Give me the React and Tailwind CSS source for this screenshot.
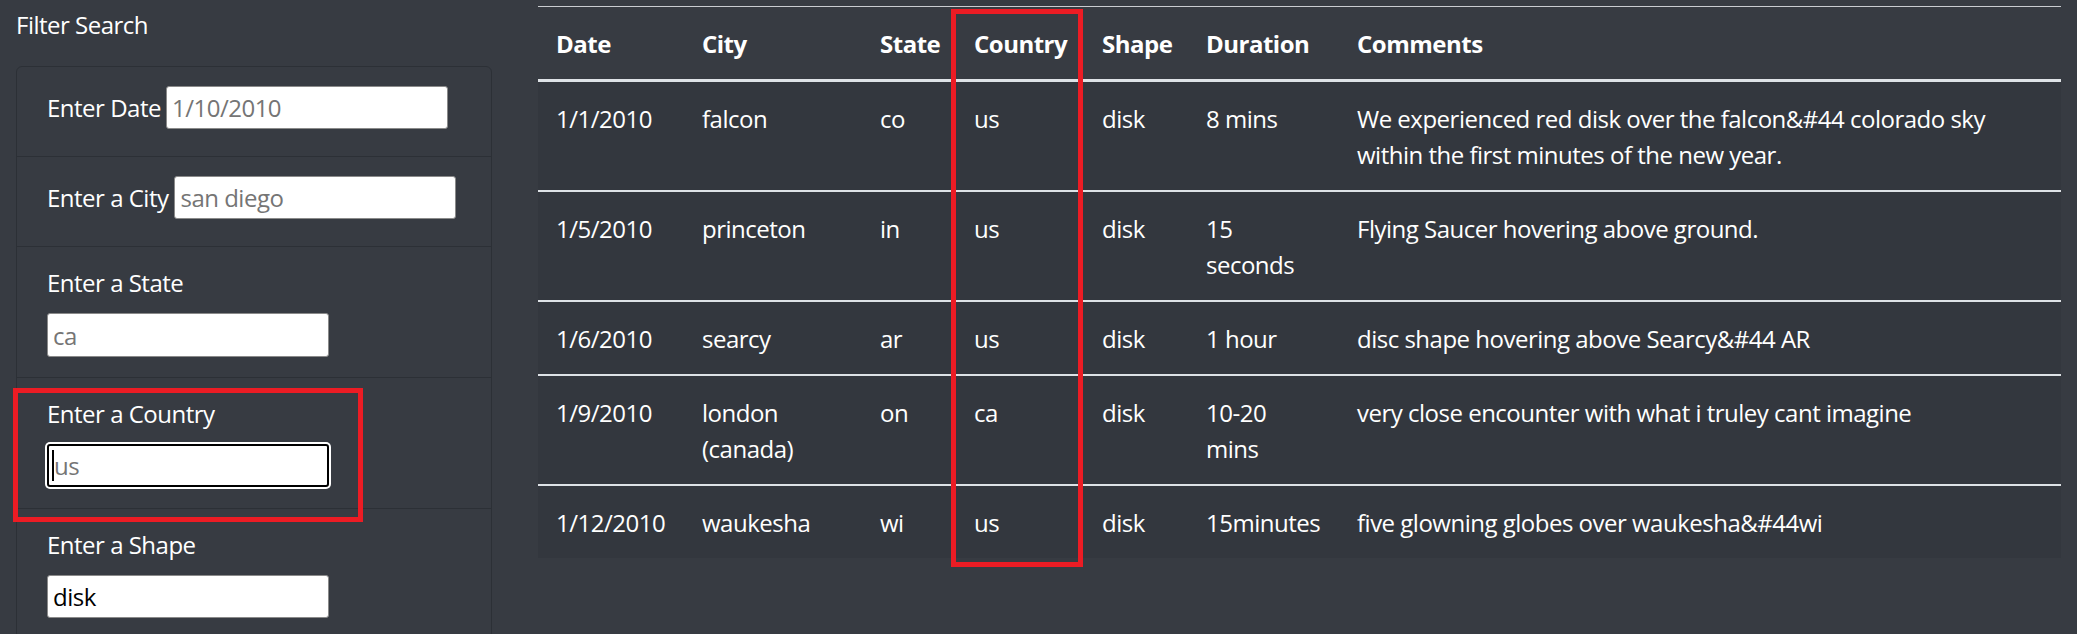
import React from "react";

const rows = [
  { date: "1/1/2010", city: "falcon", state: "co", country: "us", shape: "disk", duration: "8 mins", comments: "We experienced red disk over the falcon&#44 colorado sky within the first minutes of the new year." },
  { date: "1/5/2010", city: "princeton", state: "in", country: "us", shape: "disk", duration: "15 seconds", comments: "Flying Saucer hovering above ground." },
  { date: "1/6/2010", city: "searcy", state: "ar", country: "us", shape: "disk", duration: "1 hour", comments: "disc shape hovering above Searcy&#44 AR" },
  { date: "1/9/2010", city: "london (canada)", state: "on", country: "ca", shape: "disk", duration: "10-20 mins", comments: "very close encounter with what i truley cant imagine" },
  { date: "1/12/2010", city: "waukesha", state: "wi", country: "us", shape: "disk", duration: "15minutes", comments: "five glowning globes over waukesha&#44wi" },
];

const inputCls =
  "h-[43px] w-[282px] shrink-0 bg-white rounded-[3px] border border-[#8a8a8a] px-[5px] text-[24px] tracking-[-0.5px] text-black placeholder:text-[#757575] outline-none";

export default function App() {
  return (
    <div
      className="relative min-h-screen bg-[#373b42] text-white flex text-[24px] leading-[36px] tracking-[-0.5px]"
      style={{ fontFamily: '"Open Sans", "Noto Sans", sans-serif' }}
    >
      {/* Filters */}
      <div className="pl-[16px] w-[492px] shrink-0">
        <h5 className="pt-[7px] text-[24px] leading-[36px]">Filter Search</h5>
        <ul className="mt-[23px] border border-[#2c3036] rounded-[6px]">
          <li className="pl-[30px] pr-[30px] pt-[19px] pb-[27px]">
            <div className="flex items-center h-[43px]">
              <label className="whitespace-nowrap">Enter Date</label>
              <input className={inputCls + " ml-[5px]"} placeholder="1/10/2010" />
            </div>
          </li>
          <li className="pl-[30px] pr-[30px] pt-[19px] pb-[27px] border-t border-[#2c3036]">
            <div className="flex items-center h-[43px]">
              <label className="whitespace-nowrap">Enter a City</label>
              <input className={inputCls + " ml-[6px]"} placeholder="san diego" />
            </div>
          </li>
          <li className="pl-[30px] pr-[30px] pt-[18px] pb-[20px] border-t border-[#2c3036]">
            <label className="block mb-[12px]">Enter a State</label>
            <input className={inputCls + " h-[44px]"} placeholder="ca" />
          </li>
          <li className="pl-[30px] pr-[30px] pt-[18px] pb-[21px] border-t border-[#2c3036]">
            <label className="block mb-[12px]">Enter a Country</label>
            <div className="relative w-[282px]">
              <input
                className={inputCls + " border-2 border-black shadow-[0_0_0_2px_#ffffff]"}
                placeholder="us"
              />
              <span className="absolute left-[5px] top-[6px] w-[2px] h-[31px] bg-black" />
            </div>
          </li>
          <li className="pl-[30px] pr-[30px] pt-[18px] pb-[20px] border-t border-[#2c3036]">
            <label className="block mb-[12px]">Enter a Shape</label>
            <input className={inputCls} defaultValue="disk" />
          </li>
        </ul>
      </div>

      {/* Results table */}
      <div className="ml-[46px] pt-[6px] w-[1523px] shrink-0">
        <table className="w-full table-fixed border-collapse text-left">
          <colgroup>
            <col className="w-[146px]" />
            <col className="w-[178px]" />
            <col className="w-[94px]" />
            <col className="w-[128px]" />
            <col className="w-[104px]" />
            <col className="w-[151px]" />
            <col />
          </colgroup>
          <thead>
            <tr className="border-t border-[#c9ccd0] border-b-[3px] border-b-[#dee2e6]">
              {["Date", "City", "State", "Country", "Shape", "Duration", "Comments"].map((h) => (
                <th key={h} className="px-[18px] pt-[19px] pb-[17px] font-bold align-bottom">
                  {h}
                </th>
              ))}
            </tr>
          </thead>
          <tbody className="bg-[#33373e]">
            {rows.map((r, i) => (
              <tr key={i} className={i === 0 ? "" : "border-t-2 border-[#dee2e6]"}>
                <td className="px-[18px] pt-[19px] pb-[17px] align-top">{r.date}</td>
                <td className="px-[18px] pt-[19px] pb-[17px] align-top">{r.city}</td>
                <td className="px-[18px] pt-[19px] pb-[17px] align-top">{r.state}</td>
                <td className="px-[18px] pt-[19px] pb-[17px] align-top">{r.country}</td>
                <td className="px-[18px] pt-[19px] pb-[17px] align-top">{r.shape}</td>
                <td className="px-[18px] pt-[19px] pb-[17px] align-top">{r.duration}</td>
                <td className="px-[18px] pt-[19px] pb-[17px] align-top">{r.comments}</td>
              </tr>
            ))}
          </tbody>
        </table>
      </div>

      {/* annotation boxes */}
      <div className="absolute left-[13px] top-[388px] w-[350px] h-[134px] border-[5px] border-[#ec1c24] pointer-events-none" />
      <div className="absolute left-[951px] top-[9px] w-[132px] h-[558px] border-[5px] border-[#ec1c24] pointer-events-none" />
    </div>
  );
}
